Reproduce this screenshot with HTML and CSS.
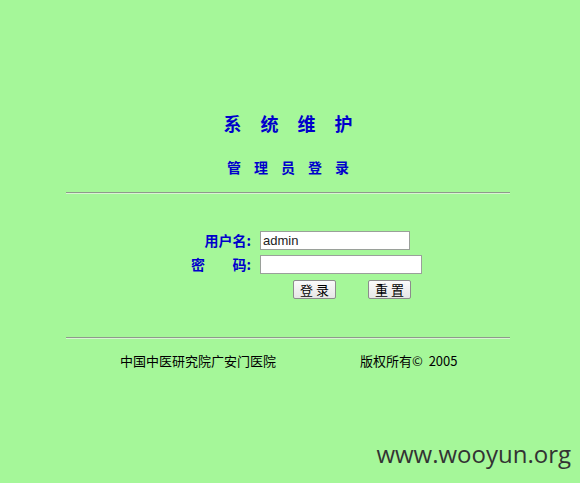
FILE: index.html
```html
<!DOCTYPE html>
<html lang="zh">
<head>
<meta charset="utf-8">
<title>系统维护</title>
<link rel="stylesheet" href="styles.css">
</head>
<body>
<div class="page">
  <div class="title"><span>系</span><span>统</span><span>维</span><span>护</span></div>
  <div class="subtitle"><span>管</span><span>理</span><span>员</span><span>登</span><span>录</span></div>
  <div class="rule"></div>
  <form class="login">
    <label class="lbl" for="u">用户名:</label>
    <input class="field" id="u" type="text" value="admin">
    <label class="lbl lbl-pw" for="p"><span>密</span><span>码:</span></label>
    <input class="field field-pw" id="p" type="password">
    <div class="buttons">
      <button type="button" class="btn">登 录</button>
      <button type="button" class="btn">重 置</button>
    </div>
  </form>
  <div class="rule rule-2"></div>
  <div class="footer">
    <span class="org">中国中医研究院广安门医院</span>
    <span class="copy">版权所有©&nbsp; 2005</span>
  </div>
</div>
<div class="watermark">www.wooyun.org</div>
</body>
</html>
```
FILE: styles.css
```css
html, body {
  margin: 0;
  padding: 0;
}
body {
  background: #a5f799;
  width: 580px;
  height: 483px;
  overflow: hidden;
  position: relative;
  font-family: "Noto Sans CJK SC", "Noto Sans", sans-serif;
  color: #000;
}
.page {
  width: 444px;
  margin-left: 66px;
  padding-top: 113px;
}
.title {
  display: flex;
  justify-content: center;
  gap: 19px;
  font-size: 18px;
  line-height: 20px;
  font-weight: bold;
  color: #0000cc;
}
.subtitle {
  display: flex;
  justify-content: center;
  gap: 13px;
  font-size: 14px;
  line-height: 16px;
  font-weight: bold;
  color: #0000cc;
  margin-top: 26px;
}
.rule {
  margin-top: 17px;
  height: 0;
  border-top: 1px solid #8f9a8c;
  border-bottom: 1px solid #d8f5d2;
}
.login {
  display: grid;
  grid-template-columns: 185px auto;
  column-gap: 9px;
  row-gap: 5px;
  margin-top: 37px;
  align-items: center;
  justify-items: start;
}
.lbl {
  justify-self: end;
  font-size: 14px;
  line-height: 19px;
  font-weight: bold;
  color: #0000cc;
}
.lbl-pw {
  width: 60px;
  display: flex;
  justify-content: space-between;
}
.field {
  box-sizing: border-box;
  width: 150px;
  height: 19px;
  margin: 0;
  padding: 0 2px;
  border: 1px solid #9aa09a;
  background: #fff;
  font-family: Arial, "Liberation Sans", sans-serif;
  font-size: 13px;
  color: #222;
  outline: none;
}
.field-pw {
  width: 162px;
}
.buttons {
  grid-column: 2;
  display: flex;
  gap: 32px;
  padding-left: 33px;
  margin-top: 1px;
}
.btn {
  box-sizing: border-box;
  width: 43px;
  height: 19px;
  margin: 0;
  padding: 0;
  border: 1px solid #8c8c8c;
  border-radius: 2px;
  background: linear-gradient(#fafafa, #e6e6e6);
  font-family: "Noto Sans CJK SC", sans-serif;
  font-size: 13px;
  line-height: 17px;
  color: #000;
}
.rule-2 {
  margin-top: 38px;
}
.footer {
  display: flex;
  margin-top: 13px;
  font-size: 13px;
  line-height: 18px;
  color: #000;
}
.org {
  margin-left: 54px;
  width: 240px;
}
.copy {
  font-family: "Noto Sans CJK SC", sans-serif;
}
.watermark {
  position: absolute;
  right: 9px;
  bottom: 14px;
  font-family: "Open Sans", "DejaVu Sans", sans-serif;
  font-size: 24px;
  line-height: 30px;
  color: #333;
}
```
